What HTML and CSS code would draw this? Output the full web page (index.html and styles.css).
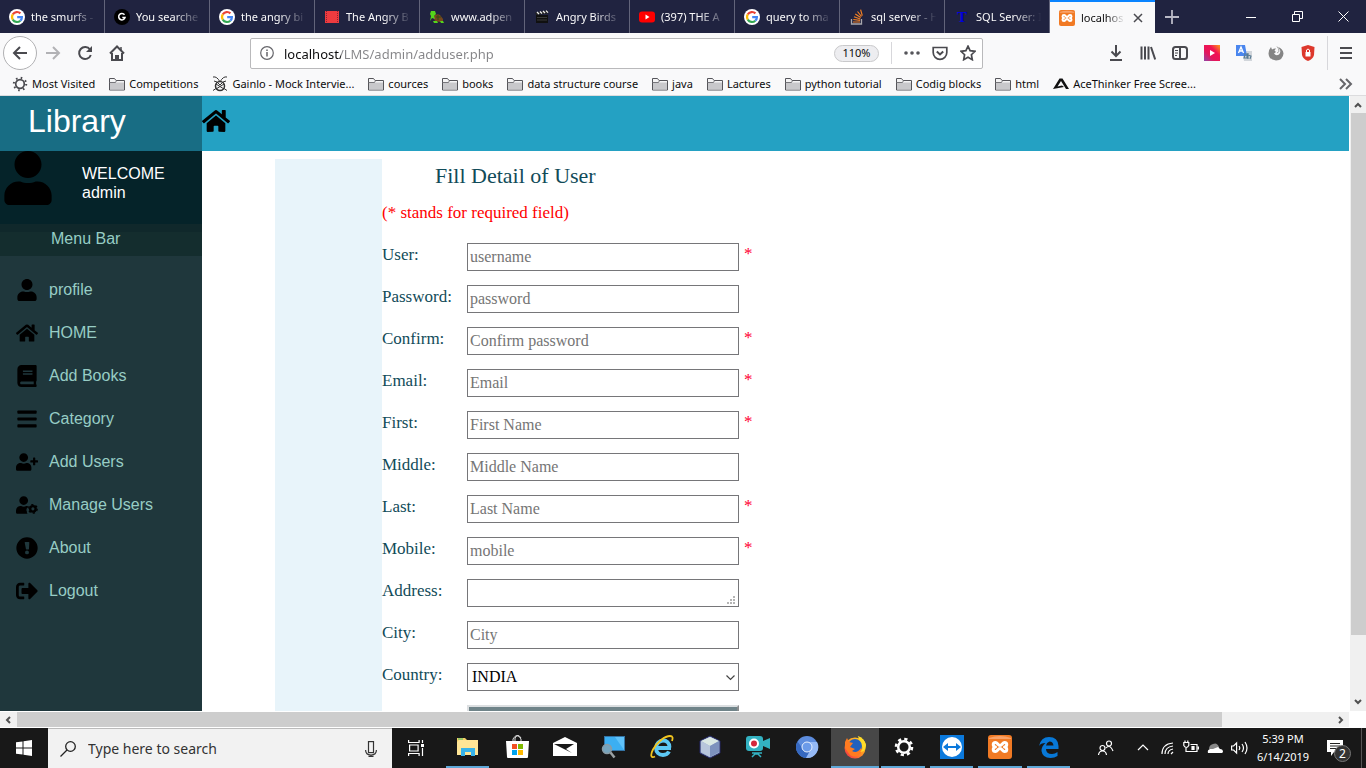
FILE: index.html
```html
<!DOCTYPE html>
<html lang="en">
<head>
<meta charset="utf-8">
<title>localhost/LMS/admin/adduser.php</title>
<link rel="stylesheet" href="styles.css">
</head>
<body>
<svg class="defs" aria-hidden="true">
  <symbol id="google" viewBox="0 0 16 16"><circle cx="8" cy="8" r="8" fill="#fff"/><g fill="none" stroke-width="2.2"><path d="M11.4 4.4A4.9 4.9 0 0 0 3.8 5.4" stroke="#ea4335"/><path d="M3.8 5.4a4.9 4.9 0 0 0 0 5.2" stroke="#fbbc05"/><path d="M3.8 10.6a4.9 4.9 0 0 0 7.5 1.1" stroke="#34a853"/><path d="M11.3 11.7A4.6 4.6 0 0 0 12.9 8.2H8.2" stroke="#4285f4"/></g></symbol>
  <symbol id="folder" viewBox="0 0 16 14"><path d="M.5 13V1.5h5l1.5 2h8.5V13z" fill="#f4f4f5" stroke="#55555a"/><path d="M1 5.5h14v7H1z" fill="#c8c8cb"/><path d="M.5 5.5h6l1-2" fill="none" stroke="#77777b"/></symbol>
  <symbol id="xampp" viewBox="0 0 24 24"><rect width="24" height="24" rx="3" fill="#f17a24"/><path d="M1 3q11-4 22 0v1H1z" fill="#f9a269"/><path d="M7.5 7.5c-3 0-3 4 0 4.500-3 .5-3 4.500 0 4.500 2 0 2.500-3 4.500-3s2.500 3 4.500 3c3 0 3-4 0-4.500 3-.5 3-4.500 0-4.500-2 0-2.500 3-4.500 3s-2.500-3-4.500-3z" fill="none" stroke="#fff" stroke-width="3" stroke-linejoin="round"/></symbol>
  <symbol id="home" viewBox="0 0 576 512"><path d="M280.370 148.260L96 300.110V464a16 16 0 0 0 16 16l112.060-.29a16 16 0 0 0 15.920-16V368a16 16 0 0 1 16-16h64a16 16 0 0 1 16 16v95.640a16 16 0 0 0 16 16.050L464 480a16 16 0 0 0 16-16V300L295.670 148.260a12.190 12.190 0 0 0-15.300 0zM571.600 251.470L488 182.560V44.050a12 12 0 0 0-12-12h-56a12 12 0 0 0-12 12v72.610L318.470 43a48 48 0 0 0-61 0L4.340 251.470a12 12 0 0 0-1.600 16.900l25.500 31A12 12 0 0 0 45.150 301l235.220-193.740a12.190 12.190 0 0 1 15.300 0L530.900 301a12 12 0 0 0 16.900-1.600l25.500-31a12 12 0 0 0-1.700-16.930z"/></symbol>
  <symbol id="user" viewBox="0 0 448 512"><path d="M224 256c70.700 0 128-57.300 128-128S294.700 0 224 0 96 57.300 96 128s57.300 128 128 128zm89.600 32h-16.700c-22.200 10.200-46.900 16-72.900 16s-50.600-5.800-72.900-16h-16.700C60.200 288 0 348.200 0 422.400V464c0 26.500 21.500 48 48 48h352c26.500 0 48-21.500 48-48v-41.600c0-74.200-60.200-134.400-134.400-134.400z"/></symbol>
</svg>

<header class="browser">
  <nav class="tabs" aria-label="Tabs">
    <button class="tab"><svg class="fav"><use href="#google"/></svg><span class="tab-text">the smurfs -</span></button>
    <button class="tab"><svg class="fav" viewBox="0 0 16 16"><circle cx="8" cy="8" r="8" fill="#000"/><path d="M10.500 5.800A3.200 3.200 0 1 0 11 8.500H8.300" fill="none" stroke="#fff" stroke-width="1.500"/></svg><span class="tab-text">You searche</span></button>
    <button class="tab"><svg class="fav"><use href="#google"/></svg><span class="tab-text">the angry bi</span></button>
    <button class="tab"><svg class="fav" viewBox="0 0 16 16"><path d="M1 2h14v12H1z" fill="#ed3b3f"/><path d="M2.500 2v12M13.500 2v12" stroke="#8d2030" stroke-width="1" stroke-dasharray="1 1"/></svg><span class="tab-text">The Angry B</span></button>
    <button class="tab"><svg class="fav" viewBox="0 0 16 16"><path d="M4 8q3-4 7-2l3 4v2l-3 1-5-1z" fill="#77471c"/><path d="M2 2h4l1 3-2 2 1 3-3-1-2 3 1-5-1-2zM4 12h4l1 2H5zM11 12h3l1 2h-3z" fill="#55d51b"/><path d="M7 8h5M9 6v5" stroke="#334c15"/></svg><span class="tab-text">www.adpen</span></button>
    <button class="tab"><svg class="fav" viewBox="0 0 16 16"><path d="M2 6h12v8H2z" fill="#101010"/><path d="M1 3.500l13-2v3L2 6z" fill="#222"/><path d="M3 3l2 2M6 2.500l2 2M9 2l2 2M12 1.600l2 2" stroke="#eee" stroke-width="1.300"/><path d="M3 8.500h10M3 11h10" stroke="#393939"/></svg><span class="tab-text">Angry Birds</span></button>
    <button class="tab"><svg class="fav" viewBox="0 0 16 16"><rect y="2.500" width="16" height="11" rx="3" fill="#f00"/><path d="M6.500 5.500v5l4-2.500z" fill="#fff"/></svg><span class="tab-text">(397) THE A</span></button>
    <button class="tab"><svg class="fav"><use href="#google"/></svg><span class="tab-text">query to ma</span></button>
    <button class="tab"><svg class="fav" viewBox="0 0 16 16"><path d="M2.500 10v5h10v-5" fill="none" stroke="#a8a8ad" stroke-width="1.300"/><path d="M4 13h7M4.300 10.500l6.800.8M5 7.700l6.300 2.300M6.300 5l5.400 3.600M8.500 2.500l4 5M11.600.7l1.700 6" stroke="#f48024" stroke-width="1.200"/></svg><span class="tab-text">sql server - H</span></button>
    <button class="tab"><b class="fav letter">T</b><span class="tab-text">SQL Server: I</span></button>
    <button class="tab active"><svg class="fav"><use href="#xampp"/></svg><span class="tab-text">localhos</span><svg class="close" viewBox="0 0 10 10"><path d="M1 1l8 8M9 1L1 9" stroke="#4a4a4f" stroke-width="1.500"/></svg></button>
    <button class="new-tab" aria-label="New tab"><svg width="14" height="14" viewBox="0 0 14 14"><path d="M7 0v14M0 7h14" stroke="#b9b9c6" stroke-width="1.800"/></svg></button>
    <div class="window-buttons">
      <button aria-label="Minimize"><svg width="10" height="10"><path d="M0 5.500h10" stroke="#fff"/></svg></button>
      <button aria-label="Restore"><svg width="11" height="11" fill="none" stroke="#fff"><path d="M.5 3.500h7v7h-7zM2.500 3.500v-3h8v7h-3"/></svg></button>
      <button aria-label="Close"><svg width="11" height="11"><path d="M.5.5l10 10M10.500.5l-10 10" stroke="#fff"/></svg></button>
    </div>
  </nav>

  <div class="toolbar">
    <button class="back" aria-label="Back"><svg width="16" height="16" class="line"><path d="M15 8H2M8 2L2 8l6 6"/></svg></button>
    <button class="tool faded" aria-label="Forward"><svg width="16" height="16" class="line"><path d="M1 8h13M8 2l6 6-6 6"/></svg></button>
    <button class="tool" aria-label="Reload"><svg width="16" height="16" class="line"><path d="M13 4.500A6 6 0 1 0 13.800 10"/><path d="M15 1v6H9z" fill="#4a4a4f" stroke="none"/></svg></button>
    <button class="tool" aria-label="Home"><svg width="16" height="16" class="line"><path d="M1 8.500L8 1.500l7 7M3 8v7h10V8M7 15v-4h2v4"/><path d="M12 2v4" stroke-width="1.500"/></svg></button>
    <div class="urlbar">
      <svg width="14" height="14" viewBox="0 0 14 14" fill="none" stroke="#66666b"><circle cx="7" cy="7" r="6.300" stroke-width="1.200"/><path d="M7 6v4.500M7 3.500v1.400" stroke-width="1.500"/></svg>
      <input class="url" aria-label="Address" value="localhost/LMS/admin/adduser.php">
      <button class="zoom">110%</button>
      <span class="url-sep"></span>
      <button class="small-tool" aria-label="Page actions"><svg width="16" height="16" fill="#55555a"><circle cx="2" cy="8" r="1.800"/><circle cx="8" cy="8" r="1.800"/><circle cx="14" cy="8" r="1.800"/></svg></button>
      <button class="small-tool" aria-label="Pocket"><svg width="16" height="16" class="line"><path d="M1.200 2.500h13.600v5a6.800 6.800 0 0 1-13.600 0z" stroke-width="1.700"/><path d="M4.800 6.500L8 9.500l3.200-3"/></svg></button>
      <button class="small-tool" aria-label="Bookmark"><svg width="16" height="16" class="line"><path d="M8 1.200l2.100 4.500 4.900.6-3.600 3.400.9 5L8 12.300l-4.300 2.400.9-5L1 6.300l4.900-.6z" stroke-width="1.700"/></svg></button>
    </div>
    <div class="extensions">
      <button class="tool" aria-label="Downloads"><svg width="16" height="16" class="line"><path d="M8 0v11M3.500 6.500L8 11l4.500-4.500M2 15h12"/></svg></button>
      <button class="tool" aria-label="Library"><svg width="16" height="16" class="line"><path d="M1.500 1.500v13M5 1.500v13M8.500 1.500v13M11 2l4.200 12.500"/></svg></button>
      <button class="tool" aria-label="Sidebar"><svg width="16" height="16" class="line"><rect x="1" y="2" width="14" height="12" rx="2.500"/><path d="M8 2v12"/><path d="M3 5.500h3M3 8h3M3 10.500h2" stroke-width="1"/></svg></button>
      <button class="tool" aria-label="Video"><svg width="16" height="16"><defs><linearGradient id="vg" x1="0" y1="1" x2="1" y2="0"><stop offset="0" stop-color="#9046a8"/><stop offset=".35" stop-color="#e5165b"/><stop offset=".65" stop-color="#f01353"/><stop offset="1" stop-color="#ff9d18"/></linearGradient></defs><path d="M0 0h16v16H0z" fill="url(#vg)"/><path d="M6 5v6l5-3z" fill="#fff"/></svg></button>
      <button class="tool" aria-label="Translate"><svg width="16" height="16"><path d="M6 6h10v10H8z" fill="#d2d6db"/><path d="M0 0h9l2 11H0z" fill="#4a86ee"/><path d="M2.500 8l2.500-6 2.500 6M3.500 6h3" fill="none" stroke="#fff" stroke-width="1.300"/><path d="M8 9h3v4H8l1-3M12 8v6M12 10l3 1-1 3" fill="none" stroke="#587b93" stroke-width="1.100"/></svg></button>
      <button class="tool" aria-label="Firefox account"><svg width="16" height="16"><path d="M3 2l1 2.500Q6 3 8 3.500L6.500 5.500 8 7 6 8.500q2 3 5 1 2-2 1-4.500l-2-3q5 1.500 5.500 6.500-.5 6.500-7.500 7-7-.5-7.500-7Q.7 4.500 3 2z" fill="#858585"/><path d="M9 1.500q2 2 2 5l-2 1.500" fill="none" stroke="#a9a9a9"/></svg></button>
      <button class="tool" aria-label="Shield"><svg width="16" height="16"><path d="M8 0l6.500 2-.5 8q-1 4-6 6-5-2-6-6l-.5-8z" fill="#dd382c"/><path d="M5.500 7h5v4.500h-5z" fill="#fff"/><path d="M6.500 7V5q1.500-2 3 0v2" fill="none" stroke="#fff"/></svg></button>
    </div>
    <button class="menu" aria-label="Menu"><svg width="14" height="14"><path d="M1 2h12M1 7h12M1 12h12" stroke="#4a4a4f" stroke-width="2"/></svg></button>
  </div>

  <nav class="bookmarks" aria-label="Bookmarks">
    <a href="#"><svg width="16" height="16" viewBox="0 0 16 16" fill="none" stroke="#4a4a4f"><circle cx="8" cy="8" r="4.300" stroke-width="1.700"/><circle cx="8" cy="8" r="6.200" stroke-width="2" stroke-dasharray="1.600 3.269"/></svg>Most Visited</a>
    <a href="#"><svg width="16" height="14"><use href="#folder"/></svg>Competitions</a>
    <a href="#"><svg width="16" height="16" fill="none" stroke="#333"><circle cx="8" cy="10" r="4.500" stroke-width="1.500"/><path d="M1 1q4-1 7 5 3-6 7-5M2 5q3 0 6 4M14 5q-3 0-6 4M1 14.500l3-2M15 14.500l-3-2M4 8l8 5M12 8l-8 5"/></svg>Gainlo - Mock Intervie...</a>
    <a href="#"><svg width="16" height="14"><use href="#folder"/></svg>cources</a>
    <a href="#"><svg width="16" height="14"><use href="#folder"/></svg>books</a>
    <a href="#"><svg width="16" height="14"><use href="#folder"/></svg>data structure course</a>
    <a href="#"><svg width="16" height="14"><use href="#folder"/></svg>java</a>
    <a href="#"><svg width="16" height="14"><use href="#folder"/></svg>Lactures</a>
    <a href="#"><svg width="16" height="14"><use href="#folder"/></svg>python tutorial</a>
    <a href="#"><svg width="16" height="14"><use href="#folder"/></svg>Codig blocks</a>
    <a href="#"><svg width="16" height="14"><use href="#folder"/></svg>html</a>
    <a href="#"><svg width="16" height="16"><path d="M6.500 2.500h3L16 13h-3L8 5 4.500 10.500 9 9.500l2 1.500L0 13z" fill="#111"/></svg>AceThinker Free Scree...</a>
    <button class="more" aria-label="More bookmarks"><svg width="14" height="12" fill="none" stroke="#66666a" stroke-width="2"><path d="M1 1l5 5-5 5M7 1l5 5-5 5"/></svg></button>
  </nav>
</header>

<div class="viewport">
  <div class="page">
    <aside class="sidebar">
      <h1 class="brand">Library</h1>
      <div class="welcome"><svg class="avatar"><use href="#user"/></svg><p>WELCOME<br>admin</p></div>
      <h2 class="menu-title">Menu Bar</h2>
      <nav class="side-nav" aria-label="Menu Bar">
        <a href="#"><svg class="side-icon"><use href="#user"/></svg>profile</a>
        <a href="#"><svg class="side-icon"><use href="#home"/></svg>HOME</a>
        <a href="#"><svg class="side-icon" viewBox="0 0 448 512"><path d="M448 360V24c0-13.300-10.700-24-24-24H96C43 0 0 43 0 96v320c0 53 43 96 96 96h328c13.300 0 24-10.700 24-24v-16c0-7.500-3.500-14.300-8.900-18.700-4.200-15.400-4.200-59.300 0-74.700 5.400-4.300 8.900-11.100 8.900-18.600zM128 134c0-3.300 2.700-6 6-6h212c3.300 0 6 2.700 6 6v20c0 3.300-2.700 6-6 6H134c-3.300 0-6-2.700-6-6v-20zm0 64c0-3.300 2.700-6 6-6h212c3.300 0 6 2.700 6 6v20c0 3.300-2.700 6-6 6H134c-3.300 0-6-2.700-6-6v-20zm253.400 250H96c-17.700 0-32-14.300-32-32 0-17.600 14.400-32 32-32h285.400c-1.900 17.100-1.900 46.900 0 64z"/></svg>Add Books</a>
        <a href="#"><svg class="side-icon" viewBox="0 0 448 512"><rect y="60" width="448" height="72" rx="16"/><rect y="220" width="448" height="72" rx="16"/><rect y="380" width="448" height="72" rx="16"/></svg>Category</a>
        <a href="#"><svg class="side-icon" viewBox="0 0 640 512"><path d="M624 208h-64v-64c0-8.800-7.200-16-16-16h-32c-8.800 0-16 7.200-16 16v64h-64c-8.800 0-16 7.200-16 16v32c0 8.800 7.200 16 16 16h64v64c0 8.800 7.200 16 16 16h32c8.800 0 16-7.200 16-16v-64h64c8.800 0 16-7.200 16-16v-32c0-8.800-7.200-16-16-16zM224 256c70.700 0 128-57.300 128-128S294.700 0 224 0 96 57.300 96 128s57.300 128 128 128zm89.600 32h-16.700c-22.200 10.200-46.900 16-72.900 16s-50.600-5.800-72.900-16h-16.700C60.200 288 0 348.200 0 422.400V464c0 26.500 21.500 48 48 48h352c26.500 0 48-21.500 48-48v-41.600c0-74.200-60.200-134.400-134.400-134.400z"/></svg>Add Users</a>
        <a href="#"><svg class="side-icon" viewBox="0 0 640 512"><path d="M224 256c70.700 0 128-57.300 128-128S294.700 0 224 0 96 57.300 96 128s57.300 128 128 128zm89.600 32h-16.700c-22.200 10.200-46.900 16-72.900 16s-50.600-5.800-72.900-16h-16.700C60.200 288 0 348.200 0 422.400V464c0 26.500 21.500 48 48 48h290q-30-30-20-70-30-40 0-90 20-30 60-40-30-24-64-24z"/><g fill="none" stroke="#000"><circle cx="492" cy="368" r="80" stroke-width="70"/><circle cx="492" cy="368" r="125" stroke-width="38" stroke-dasharray="65 66"/></g></svg>Manage Users</a>
        <a href="#"><svg class="side-icon" viewBox="0 0 512 512"><path fill-rule="evenodd" d="M256 8a248 248 0 1 0 0 496 248 248 0 1 0 0-496zm-54 120q-1-12 12-12h84q13 0 12 12l-8 148q0 12-12 12h-48q-12 0-12-12zm54 184a46 46 0 1 1 0 92 46 46 0 1 1 0-92z"/></svg>About</a>
        <a href="#"><svg class="side-icon" viewBox="0 0 512 512"><path d="M497 273L329 441c-15 15-41 4.500-41-17v-96H152c-13.300 0-24-10.700-24-24v-96c0-13.300 10.700-24 24-24h136V88c0-21.400 25.900-32 41-17l168 168c9.300 9.400 9.300 24.600 0 34zM192 436v-40c0-6.600-5.400-12-12-12H96c-17.700 0-32-14.300-32-32V160c0-17.700 14.300-32 32-32h84c6.600 0 12-5.400 12-12V76c0-6.600-5.400-12-12-12H96c-53 0-96 43-96 96v192c0 53 43 96 96 96h84c6.600 0 12-5.400 12-12z"/></svg>Logout</a>
      </nav>
    </aside>
    <main class="main">
      <div class="topbar"><a href="#" aria-label="Home"><svg class="top-home"><use href="#home"/></svg></a></div>
      <div class="content">
        <div class="panel"></div>
        <form class="form">
          <h3>Fill Detail of User</h3>
          <p class="note">(* stands for required field)</p>
          <div class="row"><label for="user-name">User:</label><input id="user-name" class="field" placeholder="username"><span class="star">*</span></div>
          <div class="row"><label for="pass">Password:</label><input id="pass" type="password" class="field" placeholder="password"></div>
          <div class="row"><label for="confirm">Confirm:</label><input id="confirm" type="password" class="field" placeholder="Confirm password"><span class="star">*</span></div>
          <div class="row"><label for="email">Email:</label><input id="email" type="email" class="field" placeholder="Email"><span class="star">*</span></div>
          <div class="row"><label for="first">First:</label><input id="first" class="field" placeholder="First Name"><span class="star">*</span></div>
          <div class="row"><label for="middle">Middle:</label><input id="middle" class="field" placeholder="Middle Name"></div>
          <div class="row"><label for="last">Last:</label><input id="last" class="field" placeholder="Last Name"><span class="star">*</span></div>
          <div class="row"><label for="mobile">Mobile:</label><input id="mobile" class="field" placeholder="mobile"><span class="star">*</span></div>
          <div class="row"><label for="address">Address:</label><div class="wrap"><textarea id="address" class="field"></textarea><svg class="grip" width="8" height="8" fill="#b5b5b5"><path d="M6 0h2v2H6zM3 3h2v2H3zM6 3h2v2H6zM0 6h2v2H0zM3 6h2v2H3zM6 6h2v2H6z"/></svg></div></div>
          <div class="row"><label for="city">City:</label><input id="city" class="field" placeholder="City"></div>
          <div class="row"><label for="country">Country:</label><div class="wrap"><select id="country" class="field"><option>INDIA</option></select><svg class="arrow" width="9" height="6" fill="none" stroke="#444"><path d="M.5.5l4 4 4-4" stroke-width="1.200"/></svg></div></div>
          <div class="row"><span></span><button class="submit" type="button" aria-label="Submit"></button></div>
        </form>
      </div>
    </main>
  </div>
  <div class="vscroll"><svg width="8" height="6" class="scroll-arrow"><path d="M1 5l3-3 3 3"/></svg><span class="vthumb"></span><svg width="8" height="6" class="scroll-arrow"><path d="M1 1l3 3 3-3"/></svg></div>
</div>
<div class="hscroll"><svg width="6" height="8" class="scroll-arrow"><path d="M5 1L2 4l3 3"/></svg><span class="hthumb"></span><svg width="6" height="8" class="scroll-arrow"><path d="M1 1l3 3-3 3"/></svg></div>

<footer class="taskbar">
  <button class="start" aria-label="Start"><svg width="16" height="16" fill="#fff"><path d="M0 2.300L6.500 1.400v6.100H0zM7.500 1.200L16 0v7.500H7.500zM0 8.500h6.500v6.100L0 13.700zM7.500 8.500H16V16l-8.500-1.200z"/></svg></button>
  <label class="search"><svg width="16" height="16" fill="none" stroke="#222" stroke-width="1.300"><circle cx="10.500" cy="5.500" r="4.800"/><path d="M7 9L.5 15.500"/></svg><input placeholder="Type here to search"><svg width="12" height="16" fill="none" stroke="#333" stroke-width="1.200"><rect x="3.500" y=".6" width="5" height="11"/><path d="M.6 9q0 5 5.400 5t5.400-5M6 14v2M3.500 15.400h5"/></svg></label>
  <button class="taskview" aria-label="Task view"><svg width="17" height="16" fill="none" stroke="#fff" stroke-width="1.200"><path d="M.6 0v2.500h10.500V0M.6 16v-2.500h10.500V16M1.600 5h8.500v6H1.600zM14.500 0v3M14.500 8v8"/><path d="M13 4h3v3h-3z" fill="#fff" stroke="none"/></svg></button>
  <div class="apps">
    <button class="running" aria-label="File Explorer"><svg width="24" height="24"><path d="M1 3h8l2 2h11v15H1z" fill="#f5cf67"/><path d="M3 5h19v15H1V7z" fill="#ffe596"/><path d="M5 21v-8h14v8h-4v-4H9v4z" fill="#38b3e9"/><path d="M2 4h5" stroke="#3fc06b"/></svg></button>
    <button aria-label="Store"><svg width="24" height="24"><path d="M8 7V4q4-7 8 0v3M10 7V3q3-5 6 0" fill="none" stroke="#ddd"/><path d="M1 6h23l-1 16q0 1-1 1H3q-1 0-1-1z" fill="#fff"/><path d="M7 9h5v5H7z" fill="#f25022"/><path d="M13 9h5v5h-5z" fill="#7fba00"/><path d="M7 15h5v5H7z" fill="#00a4ef"/><path d="M13 15h5v5h-5z" fill="#ffb900"/></svg></button>
    <button aria-label="Mail"><svg width="24" height="24"><path d="M0 8l12-6 12 6v13H0z" fill="#fff"/><path d="M1 9h20l-8 5 6 4L1 9z" fill="#191919"/></svg></button>
    <button aria-label="Screen search"><svg width="24" height="24"><path d="M3 1h21v15H3z" fill="#3474a5"/><path d="M4 2h19v13H4z" fill="#3caff2"/><path d="M14 2h9v13z" fill="#60c3fa"/><circle cx="6" cy="14" r="4.500" fill="#76a4bd" stroke="#8a9ba5" stroke-width="1.500"/><path d="M9.500 17.500l4 5" stroke="#9ba1a3" stroke-width="2.500"/></svg></button>
    <button aria-label="Internet Explorer"><svg width="24" height="24"><path d="M6.500 13H21M19.500 12.500c0-5-3-7-6.500-7s-7 3-7 7.500 3 7 7 7c3 0 5-1.500 6-3.500" fill="none" stroke="#5cc8f4" stroke-width="3.800"/><path d="M5 21.500c-4 2-5-1-2-7C7 7 15 1 20 1c3 0 3 2 2 5" fill="none" stroke="#f2c51f" stroke-width="1.800"/></svg></button>
    <button aria-label="NetBeans"><svg width="24" height="24"><path d="M12 1l10 5v12l-10 5-10-5V6z" fill="#9bafcb" stroke="#252768"/><path d="M12 2l9 4-9 5-9-5z" fill="#dbe8e4"/><path d="M12 11l9-5v11l-9 5z" fill="#7d91bd"/><path d="M3 6l9 5v11l-9-5z" fill="#b8c6dc"/></svg></button>
    <button aria-label="Recorder"><svg width="24" height="24"><rect y="1" width="17" height="15" rx="3" fill="#33b2c2"/><path d="M17 6l7-3v11l-7-3z" fill="#33b2c2"/><circle cx="8" cy="8.500" r="5" fill="#fff"/><circle cx="8" cy="8.500" r="3" fill="#d5283c"/><path d="M6 22l3-3h3l3 3M6 18h10" fill="none" stroke="#33b2c2" stroke-width="1.500"/></svg></button>
    <button aria-label="Chromium"><svg width="24" height="24"><circle cx="12" cy="12" r="11" fill="#5d8cdd"/><path d="M2.500 6.500A11 11 0 0 0 11 23l5-9-8 0z" fill="#3568c0"/><path d="M12 7h10a11 11 0 0 1-11 16l5-9z" fill="#95b9f5"/><circle cx="12" cy="12" r="5" fill="#6c9be9" stroke="#e9f0fd"/></svg></button>
    <button class="running current" aria-label="Firefox"><svg width="24" height="24"><defs><linearGradient id="ff" x1="1" y1="0" x2="0" y2="1"><stop offset="0" stop-color="#ffe226"/><stop offset=".45" stop-color="#ff9722"/><stop offset="1" stop-color="#f2254b"/></linearGradient></defs><circle cx="12" cy="13" r="10.500" fill="url(#ff)"/><path d="M15 1q6 2 8 9l-1 5-4-5z" fill="#ffdc29"/><circle cx="12" cy="11" r="7" fill="#2361bd"/><path d="M2 7l2-4 2 4 4 1-3 4 5 2-3 2q5 3 9-3v5q-5 6-11 2L2 13z" fill="#ff7b20"/><path d="M14 1q6 3 6 9 0 5-3 7l4-1 2-6q-1-6-9-9z" fill="#ffdc29"/></svg></button>
    <button class="running" aria-label="Settings"><svg width="24" height="24" fill="none" stroke="#fff"><circle cx="12" cy="12" r="5.800" stroke-width="2.500"/><circle cx="12" cy="12" r="8" stroke-width="2.600" stroke-dasharray="3.200 3.083"/></svg></button>
    <button class="running" aria-label="TeamViewer"><svg width="24" height="24"><path d="M0 0h24v24H0z" fill="#0b79dc"/><circle cx="12" cy="12" r="10" fill="#fff"/><path d="M3 12l5-4v3h8V8l5 4-5 4v-3H8v3z" fill="#0b79dc"/></svg></button>
    <button class="running" aria-label="XAMPP"><svg width="24" height="24"><use href="#xampp"/></svg></button>
    <button class="running" aria-label="Edge"><svg width="24" height="24"><path d="M2 11Q4 2 12 2q9 0 9.500 9v3H9q0 5 6 5 3 0 5.500-2v4q-3 2-7 2-8 0-9-7 0-5 4-8-5 0-6.500 3zM9 10.500h7.500q-.5-4-4-4-3 1-3.500 4z" fill="#0878d7"/></svg></button>
  </div>
  <div class="tray">
    <svg class="people" width="16" height="16"><g class="white-line"><circle cx="11" cy="3.500" r="2.500"/><circle cx="4.500" cy="8" r="2.500"/><path d="M.5 15q.5-4 4-4t4 4M8 8q1-1.500 3-1.500T15 11"/></g></svg>
    <svg class="caret" width="14" height="16"><path class="white-line" d="M2 10l5-5 5 5"/></svg>
    <svg width="14" height="16"><g class="white-line"><path d="M1 14Q1 4 12 3M4 14q0-7 8-8M7 14q0-4 5-5M10 14l2-2"/></g></svg>
    <svg width="16" height="16"><g class="white-line"><path d="M7.500 4.500H14v7H6M3 8v3.500h3M.8 2.500h5v3q-2.500 4-5 0zM2 .5v2M4.800.5v2M15.400 6.500v3"/><path d="M9 6.500h2v3H9z" fill="#fff"/></g></svg>
    <svg width="16" height="16"><path d="M2 9q0-4 4-5 4-2 6 3v2z" fill="#888"/><path d="M1 13q-1-3 2-4l3 0 5-2 2 2q3 0 3 3l-1 1z" fill="#fff"/></svg>
    <svg width="17" height="16"><g class="white-line"><path d="M.6 6h2l3-3v10l-3-3h-2zM8 6q1.500 2 0 4M11 4q3 4 0 8M14 2q4 6 0 12"/></g></svg>
    <div class="clock"><span>5:39 PM</span><span>6/14/2019</span></div>
    <button class="notify" aria-label="Notifications"><svg width="18" height="18"><path d="M0 1h16v12h-9l-3 4v-4H0z" fill="#fff"/><path d="M3 4.500h10M3 7h10M3 9.500h8" stroke="#222"/></svg><span class="badge">2</span></button>
    <span class="desktop-edge"></span>
  </div>
</footer>
</body>
</html>
```
FILE: styles.css
```css
* { box-sizing: border-box; }
body {
  margin: 0;
  height: 100vh;
  display: flex;
  flex-direction: column;
  overflow: hidden;
  font: 12px/16px "Noto Sans", "Open Sans", sans-serif;
  color: #0c0c0d;
  background: #fff;
}
button {
  border: 0;
  padding: 0;
  background: none;
  font: inherit;
  color: inherit;
  display: flex;
  align-items: center;
  justify-content: center;
}
a { color: inherit; text-decoration: none; }
svg { flex: none; display: block; }
.defs { position: absolute; width: 0; height: 0; }

.browser { flex: none; background: #f9f9fa; border-bottom: 1px solid #dcdcde; }
.tabs { display: flex; height: 33px; background: #202340; color: #f9f9fa; }
.tab {
  width: 105px;
  flex: none;
  justify-content: flex-start;
  gap: 6px;
  padding: 1px 4px 0 9px;
  border-right: 1px solid #62647a;
}
.fav { width: 16px; height: 16px; flex: none; }
.letter { color: #0000dc; font: bold 15px/16px "Liberation Serif", serif; text-align: center; }
.tab-text {
  flex: 1;
  min-width: 0;
  overflow: hidden;
  white-space: nowrap;
  text-align: left;
  font-size: 11px;
  mask-image: linear-gradient(to right, #000 55%, transparent 95%);
}
.tab.active {
  background: #f9f9fa;
  color: #0c0c0d;
  border-right: 0;
  border-top: 2px solid #0a84ff;
  padding-top: 0;
}
.close { width: 10px; height: 10px; margin-right: 8px; }
.new-tab { width: 34px; }
.window-buttons { margin-left: auto; display: flex; }
.window-buttons button { width: 46px; }

.toolbar { display: flex; align-items: center; height: 40px; padding: 0 3px; }
.line { fill: none; stroke: #4a4a4f; stroke-width: 2; }
.back { width: 34px; height: 34px; border: 1px solid #b1b1b3; border-radius: 50%; background: #fff; }
.tool { width: 32px; height: 32px; }
.faded { opacity: .4; }
.urlbar {
  flex: 1;
  height: 31px;
  margin: 0 117px;
  padding: 0 0 0 9px;
  display: flex;
  align-items: center;
  background: #fff;
  border: 1px solid #b9b9bb;
  border-radius: 2px;
}
.url {
  flex: 1;
  min-width: 0;
  border: 0;
  padding: 2px 0 0;
  margin-left: 10px;
  font: 13px/20px "Noto Sans", "Open Sans", sans-serif;
  color: transparent;
  background: linear-gradient(to right, #0c0c0d 57px, #858588 57px);
  background-clip: text;
}
.zoom {
  width: 45px;
  height: 17px;
  font-size: 11px;
  background: #ededf0;
  border: 1px solid #c9c9cb;
  border-radius: 9px;
}
.url-sep { width: 1px; height: 22px; margin: 0 6px 0 12px; background: #d7d7db; }
.small-tool { width: 28px; height: 28px; }
.extensions { display: flex; }
.menu { width: 36px; height: 34px; margin-left: 3px; border-left: 1px solid #d7d7db; }

.bookmarks { display: flex; align-items: center; height: 22px; padding: 0 13px 0 12px; gap: 14px; font-size: 11px; }
.bookmarks a { display: flex; align-items: center; gap: 4px; white-space: nowrap; }
.more { margin-left: auto; }

.viewport { flex: 1; min-height: 0; display: flex; }
.page { flex: 1; min-width: 0; display: flex; overflow: hidden; }
.sidebar {
  width: 202px;
  flex: none;
  background: #1f373c;
  color: #97cdc5;
  font: 16px/19px "Liberation Sans", Arial, sans-serif;
}
.brand { margin: 0; height: 55px; padding: 5px 28px; background: #186d84; color: #fff; font-size: 32px; line-height: 40px; font-weight: 400; }
.welcome { display: flex; height: 73px; background: #052329; color: #fff; }
.avatar { width: 48px; height: 54px; margin-left: 4px; }
.welcome p { margin: 13px 0 0 30px; }
.menu-title { margin: 0; height: 32px; padding: 5px 51px; background: linear-gradient(#10282b 8px, #142d2e 8px); font-size: 16px; font-weight: 400; }
.side-nav { display: grid; grid-auto-rows: 43px; padding-top: 12px; }
.side-nav a { display: flex; align-items: center; gap: 11px; padding-left: 16px; }
.side-icon { width: 22px; height: 22px; }

.main { flex: 1; min-width: 0; }
.topbar { height: 55px; padding-top: 12px; background: #24a1c3; }
.top-home { width: 28px; height: 26px; }
.content { display: flex; padding: 8px 0 0 73px; font: 17px/20px "Liberation Serif", "Times New Roman", serif; color: #114b59; }
.panel { width: 107px; height: 600px; flex: none; background: #e8f4fa; }
.form h3 { margin: 0 0 0 53px; padding-top: 4px; font-size: 22px; line-height: 26px; font-weight: 400; }
.note { margin: 14px 0 0; color: #f00; }
.form .note + .row { margin-top: 20px; }
.row { display: grid; grid-template-columns: 85px 272px 14px; height: 42px; align-items: start; }
.row label { padding-top: 2px; }
.field {
  width: 100%;
  height: 28px;
  display: block;
  padding: 0 2px;
  border: 1px solid #767679;
  border-radius: 0;
  background: #fff;
  color: #000;
  font: 16px/20px "Liberation Serif", "Times New Roman", serif;
}
.field::placeholder { color: #757575; }
.star { padding: 1px 0 0 5px; color: #ff0033; }
.wrap { position: relative; }
textarea.field { resize: none; overflow: hidden; }
select.field { appearance: none; padding: 0 4px; }
.grip { position: absolute; right: 4px; bottom: 3px; }
.arrow { position: absolute; right: 4px; top: 12px; pointer-events: none; }
.submit { width: 100%; height: 28px; background: #708489; border: 2px outset #dcdfe1; }

.vscroll { width: 17px; flex: none; display: flex; flex-direction: column; align-items: center; padding: 6px 0; background: #f0f0f0; border-left: 1px solid #fff; }
.scroll-arrow { fill: none; stroke: #505050; stroke-width: 2; }
.vthumb { width: 15px; height: 522px; margin: 5px 0 auto; background: #cdcdcd; }
.hscroll { height: 17px; flex: none; display: flex; align-items: center; margin-right: 17px; padding: 0 5px; background: #f0f0f0; border: solid #fff; border-width: 1px 0; }
.hthumb { width: 1205px; height: 15px; margin: 0 auto 0 6px; background: #cdcdcd; }

.taskbar { height: 40px; flex: none; display: flex; background: #181818; color: #fff; }
.start { width: 48px; }
.search { width: 344px; display: flex; align-items: center; gap: 12px; padding: 0 15px 0 12px; background: #f2f2f2; border-top: 1px solid #bbb; }
.search input { flex: 1; min-width: 0; padding: 0; border: 0; background: none; font: 14px/20px "Noto Sans", "Open Sans", sans-serif; }
.search input::placeholder { color: #333; }
.taskview { width: 48px; }
.apps { width: 629px; margin-left: 4px; display: grid; grid-template-columns: repeat(13, 1fr); }
.apps button { border-bottom: 2px solid transparent; }
.apps .running { border-image: linear-gradient(to right, transparent 4px, #5fa8d8 4px, #5fa8d8 44px, transparent 44px) 2; border-bottom: 2px solid #5fa8d8; }
.apps .current { background: #474747; border-image: none; }
.tray { margin-left: auto; display: flex; align-items: center; gap: 8px; }
.white-line { fill: none; stroke: #fff; stroke-width: 1.2; }
.people { margin-right: 14px; }
.caret { margin-right: 3px; }
.clock { width: 54px; display: grid; font-size: 11px; line-height: 18px; text-align: center; }
.notify { position: relative; width: 26px; margin-left: 9px; justify-content: flex-start; }
.badge { position: absolute; left: 7px; top: 6px; width: 17px; height: 17px; border-radius: 50%; background: #333; border: 1px solid #777; font-size: 12px; line-height: 15px; }
.desktop-edge { width: 5px; height: 40px; border-left: 1px solid #555; }
```
